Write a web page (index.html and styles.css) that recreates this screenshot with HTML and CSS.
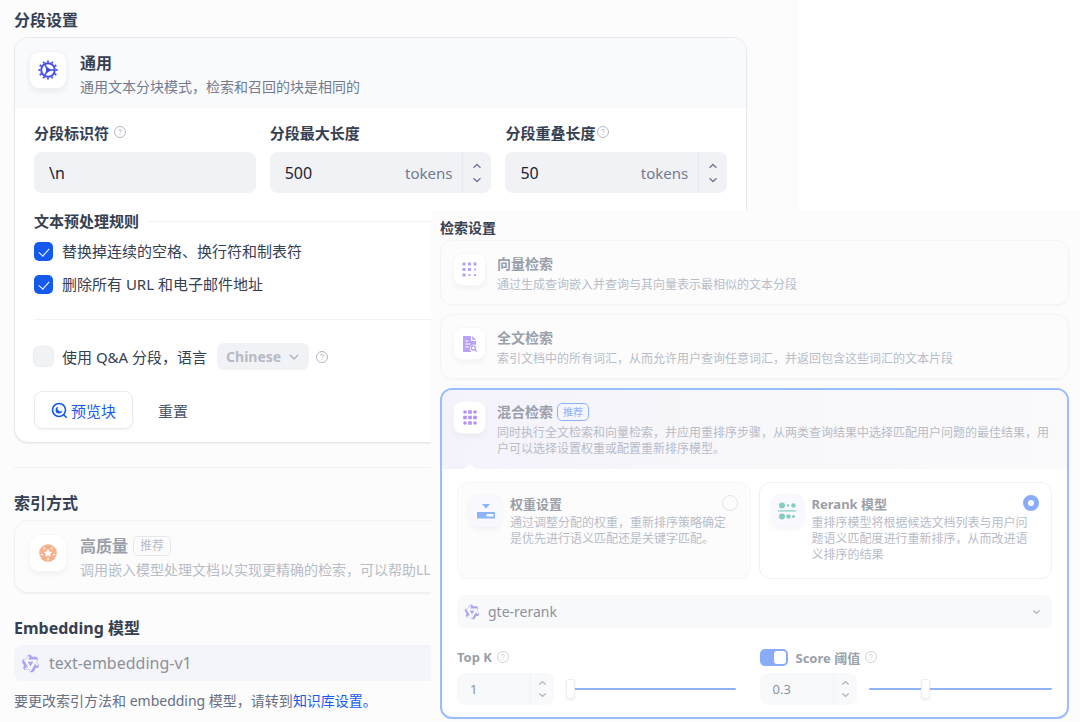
FILE: index.html
```html
<!DOCTYPE html>
<html lang="zh-CN">
<head>
    <meta charset="UTF-8">
    <meta name="viewport" content="width=device-width, initial-scale=1.0">
    <title>分段设置</title>
    <link rel="stylesheet" href="styles.css">
</head>
<body>
    <!-- shared icons -->
    <svg class="sprite" aria-hidden="true">
        <symbol id="help" viewBox="0 0 14 14">
            <circle cx="7" cy="7" r="5.5" fill="none" stroke="currentColor"/>
            <path d="M5.6 5.7a1.4 1.4 0 1 1 2 1.3q-.6.3-.6.9M7 9.1v1" fill="none" stroke="currentColor"/>
        </symbol>
        <symbol id="up" viewBox="0 0 10 6">
            <path d="M1.5 4.7 5 1.5l3.500 3.200" fill="none" stroke="currentColor" stroke-width="1.400"/>
        </symbol>
        <symbol id="down" viewBox="0 0 10 6">
            <path d="M1.5 1.300 5 4.500l3.500-3.200" fill="none" stroke="currentColor" stroke-width="1.400"/>
        </symbol>
        <symbol id="model" viewBox="0 0 24 24">
            <path fill="currentColor" fill-rule="evenodd" d="M12.604 1.34c.393.69.784 1.382 1.174 2.075a.18.18 0 00.157.091h5.552c.174 0 .322.11.446.327l1.454 2.57c.19.337.24.478.024.837-.26.43-.513.864-.76 1.3l-.367.658c-.106.196-.223.28-.04.512l2.652 4.637c.172.301.111.494-.043.77-.437.785-.882 1.564-1.335 2.34-.159.272-.352.375-.68.37-.777-.016-1.552-.01-2.327.016a.099.099 0 00-.081.05 575.097 575.097 0 01-2.705 4.74c-.169.293-.38.363-.725.364-.997.003-2.002.004-3.017.002a.537.537 0 01-.465-.271l-1.335-2.323a.09.09 0 00-.083-.049H4.982c-.285.03-.553-.001-.805-.092l-1.603-2.77a.543.543 0 01-.002-.54l1.207-2.12a.198.198 0 000-.197 550.951 550.951 0 01-1.875-3.272l-.79-1.395c-.16-.31-.173-.496.095-.965.465-.813.927-1.625 1.387-2.436.132-.234.304-.334.584-.335a338.3 338.3 0 012.589-.001.124.124 0 00.107-.063l2.806-4.895a.488.488 0 01.422-.246c.524-.001 1.053 0 1.583-.006L11.704 1c.341-.003.724.032.9.34zm-3.432.403a.06.06 0 00-.052.03L6.254 6.788a.157.157 0 01-.135.078H3.253c-.056 0-.07.025-.041.074l5.81 10.156c.025.042.013.062-.034.063l-2.795.015a.218.218 0 00-.2.116l-1.32 2.31c-.044.078-.021.118.068.118l5.716.008c.046 0 .08.02.104.061l1.403 2.454c.046.081.092.082.139 0l5.006-8.76.783-1.382a.055.055 0 01.096 0l1.424 2.53a.122.122 0 00.107.062l2.763-.02a.04.04 0 00.035-.02.041.041 0 000-.04l-2.9-5.086a.108.108 0 010-.113l.293-.507 1.12-1.977c.024-.041.012-.062-.035-.062H9.2c-.059 0-.073-.026-.043-.077l1.434-2.505a.107.107 0 000-.114L9.225 1.774a.06.06 0 00-.053-.031zm6.29 8.02c.046 0 .058.02.034.06l-.832 1.465-2.613 4.585a.056.056 0 01-.05.029.058.058 0 01-.05-.029L8.498 9.841c-.02-.034-.01-.052.028-.054l.216-.012 6.722-.012z"/>
        </symbol>
    </svg>

    <div class="page">
        <main class="settings">
            <h2 class="heading">分段设置</h2>
            <section class="card">
                <div class="card-head">
                    <span class="icon-box">
                        <svg class="icon-gear" width="20" height="20" viewBox="0 0 20 20">
                            <circle cx="10" cy="10" r="8.600" fill="none" stroke="currentColor" stroke-width="2" pathLength="36" stroke-dasharray="1.200 1.800" stroke-dashoffset=".6"/>
                            <circle cx="10" cy="10" r="6.800" fill="none" stroke="currentColor" stroke-width="1.900"/>
                            <path d="M8 6.600 13.500 10 8 13.400z" fill="currentColor"/>
                            <path d="M6.600 4.200 9 8.600M6.600 15.800 9 11.400M12 10h5" stroke="currentColor" stroke-width="1.500"/>
                        </svg>
                    </span>
                    <div class="card-text">
                        <h3>通用</h3>
                        <p>通用文本分块模式，检索和召回的块是相同的</p>
                    </div>
                </div>
                <div class="card-body">
                    <div class="fields">
                        <div class="field">
                            <div class="label-row">
                                <label for="separator">分段标识符</label>
                                <svg class="help" width="14" height="14"><use href="#help"/></svg>
                            </div>
                            <div class="input-box"><input id="separator" type="text" value="\n"></div>
                        </div>
                        <div class="field">
                            <div class="label-row"><label for="max-length">分段最大长度</label></div>
                            <div class="input-box">
                                <input id="max-length" type="number" value="500">
                                <span class="unit">tokens</span>
                                <span class="stepper">
                                    <button type="button" aria-label="增加"><svg width="10" height="6"><use href="#up"/></svg></button>
                                    <button type="button" aria-label="减少"><svg width="10" height="6"><use href="#down"/></svg></button>
                                </span>
                            </div>
                        </div>
                        <div class="field">
                            <div class="label-row tight">
                                <label for="overlap">分段重叠长度</label>
                                <svg class="help" width="14" height="14"><use href="#help"/></svg>
                            </div>
                            <div class="input-box">
                                <input id="overlap" type="number" value="50">
                                <span class="unit">tokens</span>
                                <span class="stepper">
                                    <button type="button" aria-label="增加"><svg width="10" height="6"><use href="#up"/></svg></button>
                                    <button type="button" aria-label="减少"><svg width="10" height="6"><use href="#down"/></svg></button>
                                </span>
                            </div>
                        </div>
                    </div>

                    <h4 class="rules-title">文本预处理规则</h4>
                    <div class="rules">
                        <label class="check"><input type="checkbox" checked>替换掉连续的空格、换行符和制表符</label>
                        <label class="check"><input type="checkbox" checked>删除所有 URL 和电子邮件地址</label>
                    </div>

                    <div class="qa">
                        <label class="check"><input type="checkbox" disabled>使用 Q&amp;A 分段，语言</label>
                        <span class="lang">
                            <select aria-label="语言" disabled><option>Chinese</option></select>
                            <svg width="12" height="8" viewBox="0 0 10 6"><use href="#down"/></svg>
                        </span>
                        <svg class="help" width="14" height="14"><use href="#help"/></svg>
                    </div>

                    <div class="actions">
                        <button type="button" class="btn preview">
                            <svg width="17" height="17" viewBox="0 0 17 17" fill="none" stroke="currentColor" stroke-width="1.600">
                                <circle cx="8" cy="8" r="6.500"/>
                                <path d="m12.700 12.700 3 3"/>
                                <path d="M7.500 4.600a3.500 3.500 0 1 0 4 4A2.600 2.600 0 0 1 7.500 4.600z" fill="currentColor" stroke="none"/>
                            </svg>
                            预览块
                        </button>
                        <button type="button" class="btn reset">重置</button>
                    </div>
                </div>
            </section>

            <hr class="divider">

            <h2 class="heading">索引方式</h2>
            <section class="card muted">
                <div class="card-head">
                    <span class="icon-box">
                        <svg width="18" height="18" viewBox="0 0 18 18">
                            <circle cx="9" cy="9" r="8.800" fill="#f7b08c"/>
                            <path d="m9 5 1.300 2.500 2.800.5-2 2 .4 2.800L9 11.600l-2.500 1.200.4-2.800-2-2 2.800-.5z" fill="#fff"/>
                            <g stroke="#fff" stroke-width="1.400" stroke-linecap="round">
                                <path d="m4.800 3.900.8 1M13.200 3.900l-.8 1M2.300 10.800l1.200-.4M15.700 10.800l-1.200-.4M9 15.700v-1.300"/>
                            </g>
                        </svg>
                    </span>
                    <div class="card-text">
                        <h3>高质量<span class="tag">推荐</span></h3>
                        <p>调用嵌入模型处理文档以实现更精确的检索，可以帮助LL</p>
                    </div>
                </div>
            </section>

            <h2 class="heading">Embedding 模型</h2>
            <div class="model-box">
                <svg class="model-icon" width="19" height="19"><use href="#model"/></svg>
                <select aria-label="Embedding 模型" disabled><option>text-embedding-v1</option></select>
            </div>
            <p class="note">要更改索引方法和 embedding 模型，请转到<a href="#">知识库设置。</a></p>
        </main>

        <aside class="retrieval">
            <h2>检索设置</h2>
            <section class="option">
                <div class="option-head">
                    <span class="icon-box">
                        <svg width="15" height="15" viewBox="0 0 15 15" fill="#b9a0f8">
                            <path d="M.5.5h3v3h-3zM6 .5h3v3H6zM11.500.5h3v3h-3zM.5 6h3v3h-3zM6 6h3v3H6zM.5 11.500h3v3h-3zM12 6.500h2v2h-2zM6.500 12h2v2h-2zM12 12h2v2h-2z"/>
                        </svg>
                    </span>
                    <div class="option-text">
                        <h3>向量检索</h3>
                        <p>通过生成查询嵌入并查询与其向量表示最相似的文本分段</p>
                    </div>
                </div>
            </section>
            <section class="option">
                <div class="option-head">
                    <span class="icon-box">
                        <svg width="16" height="16" viewBox="0 0 16 16">
                            <path d="M2 0h7v5h5v4.200A4 4 0 0 0 8.700 15l.8 1H2a1 1 0 0 1-1-1V1a1 1 0 0 1 1-1zM10.200 0 14 3.800h-3.800z" fill="#b9a0f8"/>
                            <path d="M3.300 5h3M3.300 8h5M3.300 11h3.500" stroke="#fff" stroke-width="1.200"/>
                            <circle cx="11.300" cy="12" r="2" fill="none" stroke="#b9a0f8" stroke-width="1.300"/>
                            <path d="m12.800 13.500 2 2" stroke="#b9a0f8" stroke-width="1.400"/>
                        </svg>
                    </span>
                    <div class="option-text">
                        <h3>全文检索</h3>
                        <p>索引文档中的所有词汇，从而允许用户查询任意词汇，并返回包含这些词汇的文本片段</p>
                    </div>
                </div>
            </section>
            <section class="option active">
                <div class="option-head">
                    <span class="icon-box">
                        <svg width="14" height="15" viewBox="0 0 14 15" fill="#b78ff5">
                            <circle cx="2" cy="2" r="1.800"/><path d="M5.200.2h3.600v3.600H5.200z"/><circle cx="12" cy="2" r="1.800"/>
                            <path d="M.2 5.700h3.600v3.600H.2zM5.200 5.700h3.600v3.600H5.200zM10.200 5.700h3.600v3.600h-3.600z"/>
                            <circle cx="2" cy="13" r="1.800"/><path d="M5.200 11.200h3.600v3.600H5.200z"/><circle cx="12" cy="13" r="1.800"/>
                        </svg>
                    </span>
                    <div class="option-text">
                        <h3>混合检索<span class="tag">推荐</span></h3>
                        <p>同时执行全文检索和向量检索，并应用重排序步骤，从两类查询结果中选择匹配用户问题的最佳结果，用户可以选择设置权重或配置重新排序模型。</p>
                    </div>
                </div>
                <div class="option-body">
                    <div class="modes">
                        <label class="mode">
                            <span class="icon-box">
                                <svg width="20" height="16" viewBox="0 0 20 16" fill="#8cb5f9">
                                    <path d="M6 1h8l-4 4.500z"/>
                                    <path fill-rule="evenodd" d="M1 9h18v6.500H1zM10.500 11v2.500h7V11z"/>
                                </svg>
                            </span>
                            <span class="mode-text">
                                <span class="mode-title">权重设置<input type="radio" name="mode"></span>
                                <span class="mode-desc">通过调整分配的权重，重新排序策略确定是优先进行语义匹配还是关键字匹配。</span>
                            </span>
                        </label>
                        <label class="mode selected">
                            <span class="icon-box">
                                <svg width="18" height="18" viewBox="0 0 18 18" fill="#84cdbf">
                                    <circle cx="4" cy="3.500" r="3"/><circle cx="10" cy="3.500" r="1.200"/><circle cx="15.500" cy="3.500" r="2.200"/>
                                    <path d="M0 8.300h18v1.200H0z"/>
                                    <circle cx="4" cy="14.500" r="3"/><circle cx="10.500" cy="14.500" r="2.200"/><circle cx="15.500" cy="14.500" r="1.500"/>
                                </svg>
                            </span>
                            <span class="mode-text">
                                <span class="mode-title">Rerank 模型<input type="radio" name="mode" checked></span>
                                <span class="mode-desc">重排序模型将根据候选文档列表与用户问题语义匹配度进行重新排序，从而改进语义排序的结果</span>
                            </span>
                        </label>
                    </div>

                    <div class="model-box small">
                        <svg class="model-icon" width="16" height="16"><use href="#model"/></svg>
                        <select aria-label="Rerank 模型"><option>gte-rerank</option></select>
                        <svg class="arrow" width="9" height="6"><use href="#down"/></svg>
                    </div>

                    <div class="params">
                        <div class="param">
                            <div class="label-row">
                                <label for="top-k">Top K</label>
                                <svg class="help" width="14" height="14"><use href="#help"/></svg>
                            </div>
                            <div class="param-row">
                                <div class="input-box small">
                                    <input id="top-k" type="number" value="1">
                                    <span class="stepper">
                                        <button type="button" aria-label="增加"><svg width="9" height="6"><use href="#up"/></svg></button>
                                        <button type="button" aria-label="减少"><svg width="9" height="6"><use href="#down"/></svg></button>
                                    </span>
                                </div>
                                <input class="slider" type="range" aria-label="Top K" min="1" max="10" value="1">
                            </div>
                        </div>
                        <div class="param">
                            <div class="label-row">
                                <input id="use-score" class="switch" type="checkbox" role="switch" aria-label="Score 阈值" checked>
                                <label for="score">Score 阈值</label>
                                <svg class="help" width="14" height="14"><use href="#help"/></svg>
                            </div>
                            <div class="param-row">
                                <div class="input-box small">
                                    <input id="score" type="number" step="0.1" value="0.3">
                                    <span class="stepper">
                                        <button type="button" aria-label="增加"><svg width="9" height="6"><use href="#up"/></svg></button>
                                        <button type="button" aria-label="减少"><svg width="9" height="6"><use href="#down"/></svg></button>
                                    </span>
                                </div>
                                <input class="slider" type="range" aria-label="Score 阈值" min="0" max="1" step="0.1" value="0.3">
                            </div>
                        </div>
                    </div>
                </div>
            </section>
        </aside>
    </div>
</body>
</html>
```
FILE: styles.css
```css
* {
    box-sizing: border-box;
}

body {
    margin: 0;
    background: #fff;
    color: #354052;
    font-family: "Noto Sans", "Noto Sans CJK SC", sans-serif;
    font-size: 15px;
}

h2, h3, h4, p {
    margin: 0;
}

input, select, button {
    font: inherit;
    color: inherit;
    margin: 0;
    padding: 0;
    border: none;
    background: none;
}

svg {
    flex: none;
}

.sprite {
    display: none;
}

.page {
    position: relative;
    min-height: 100vh;
}

/* left side */
.settings {
    width: 74%;
    min-height: 100vh;
    padding: 8px 52px 0 14px;
    background: #fcfcfd;
}

.heading {
    font-size: 16px;
    line-height: 24px;
    margin-bottom: 5px;
}

.card {
    border: 1px solid #e6e8f0;
    border-radius: 14px;
    background: #fff;
    box-shadow: 0 1px 2px rgba(16, 24, 40, 0.06);
    overflow: hidden;
}

.card-head {
    display: flex;
    gap: 14px;
    padding: 13px 15px 9px;
    background: #f9fafc;
}

.icon-box {
    flex: none;
    display: flex;
    align-items: center;
    justify-content: center;
    width: 36px;
    height: 36px;
    margin-top: 1px;
    border-radius: 9px;
    background: #fff;
    box-shadow: 0 0 0 1px #f0f1f5, 0 3px 6px rgba(16, 24, 40, 0.08);
}

.icon-gear {
    color: #444ce7;
}

.card-text h3 {
    display: flex;
    align-items: center;
    gap: 5px;
    font-size: 16px;
    line-height: 24px;
}

.card-text p {
    font-size: 14px;
    line-height: 24px;
    color: #717a90;
    white-space: nowrap;
}

.tag {
    padding: 0 6px;
    border: 1px solid #e6e7eb;
    border-radius: 5px;
    font-size: 12px;
    line-height: 18px;
    font-weight: 400;
}

.card-body {
    padding: 14px 19px 13px;
}

.fields {
    display: grid;
    grid-template-columns: repeat(3, 1fr);
    gap: 14px;
}

.label-row {
    display: flex;
    align-items: center;
    gap: 4px;
    height: 20px;
    margin-bottom: 10px;
    font-weight: 700;
}

.label-row.tight {
    gap: 1px;
}

.help {
    color: #b4b8c2;
}

.input-box {
    display: flex;
    align-items: center;
    height: 41px;
    padding-left: 15px;
    border-radius: 8px;
    background: #f1f2f6;
    font-size: 16px;
}

.input-box input {
    flex: 1;
    width: 0;
    min-width: 0;
    color: #1c2433;
    outline: none;
    appearance: textfield;
}

.input-box input::-webkit-inner-spin-button {
    display: none;
}

.unit {
    padding-right: 10px;
    font-size: 15px;
    color: #717a90;
}

.stepper {
    display: flex;
    flex-direction: column;
    align-self: stretch;
    justify-content: center;
    gap: 2px;
    width: 29px;
    border-left: 1px solid #e7e9ef;
    color: #717a90;
}

.stepper button {
    display: flex;
    align-items: center;
    justify-content: center;
    height: 12px;
}

.rules-title {
    display: flex;
    align-items: center;
    gap: 9px;
    margin-top: 18px;
    font-size: 15px;
    line-height: 20px;
}

.rules-title::after {
    content: "";
    flex: 1;
    height: 1px;
    background: #f2f3f6;
}

.rules {
    display: flex;
    flex-direction: column;
    gap: 13px;
    padding: 10px 0 25px;
    border-bottom: 1px solid #f2f3f6;
}

.check {
    display: flex;
    align-items: center;
    gap: 9px;
    line-height: 20px;
}

.check input {
    appearance: none;
    display: flex;
    justify-content: center;
    width: 19px;
    height: 19px;
    border-radius: 5px;
    background: #f1f2f6;
    box-shadow: 0 0 1px 1px #eaecf0;
}

.check input:checked {
    background: #155aef;
    box-shadow: none;
}

.check input:checked::before {
    content: "";
    width: 5px;
    height: 9px;
    margin-top: 4px;
    border: solid #fff;
    border-width: 0 1px 1px 0;
    transform: rotate(42deg);
}

.qa {
    display: flex;
    align-items: center;
    gap: 6px;
    margin-top: 23px;
}

.qa .check {
    margin-right: 4px;
}

.lang {
    display: flex;
    align-items: center;
    gap: 6px;
    height: 27px;
    padding: 0 9px;
    border-radius: 7px;
    background: #f1f2f6;
    color: #b6bac4;
    font-weight: 700;
    font-size: 14px;
}

.lang select,
.model-box select {
    appearance: none;
    opacity: 1;
}

.actions {
    display: flex;
    gap: 9px;
    margin-top: 21px;
}

.btn {
    display: flex;
    align-items: center;
    gap: 3px;
    height: 38px;
    padding: 0 16px;
    border-radius: 8px;
}

.preview {
    border: 1px solid #e9ebf0;
    color: #155aef;
    box-shadow: 0 1px 2px rgba(16, 24, 40, 0.06);
}

.reset {
    color: #4b566a;
}

.divider {
    height: 1px;
    margin: 24px 0 23px;
    border: none;
    background: #f0f1f4;
}

.card.muted {
    margin-bottom: 23px;
    border-color: #f1f2f5;
    background: #fcfcfd;
}

.muted .card-head {
    padding-bottom: 10px;
    background: none;
}

.muted .icon-box {
    box-shadow: 0 0 0 1px #f7f7fa, 0 3px 6px rgba(16, 24, 40, 0.05);
}

.muted h3 {
    color: #9a9fa9;
}

.muted p,
.muted .tag {
    color: #b8bcc7;
}

.model-box {
    display: flex;
    align-items: center;
    gap: 9px;
    height: 36px;
    padding: 0 7px;
    border-radius: 8px;
    background: #f4f5fa;
    font-size: 16px;
    color: #8e9198;
}

.model-box select {
    flex: 1;
}

.model-icon {
    color: #aba6f3;
}

.note {
    margin-top: 10px;
    font-size: 14px;
    line-height: 20px;
    color: #676f83;
}

.note a {
    color: #155aef;
    text-decoration: none;
}

/* retrieval panel lies over the lower right of the page */
.retrieval {
    position: absolute;
    top: 210px;
    right: 0;
    bottom: 0;
    left: 431px;
    padding: 8px 11px 0 9px;
    background: #fcfcfd;
}

.retrieval h2 {
    font-size: 14px;
    line-height: 20px;
    margin-bottom: 2px;
}

.option {
    margin-bottom: 9px;
    border: 1px solid #f3f4f6;
    border-radius: 12px;
    box-shadow: 0 1px 2px rgba(16, 24, 40, 0.03);
    overflow: hidden;
}

.option-head {
    display: flex;
    gap: 12px;
    padding: 12px 16px 11px 13px;
}

.retrieval .icon-box {
    width: 31px;
    height: 31px;
    border-radius: 8px;
    box-shadow: 0 0 0 1px #f7f7fa, 0 3px 6px rgba(16, 24, 40, 0.05);
}

.option-text h3 {
    display: flex;
    align-items: center;
    gap: 4px;
    margin-bottom: 3px;
    font-size: 14px;
    line-height: 21px;
    color: #9a9fa9;
}

.option-text p {
    font-size: 12px;
    line-height: 16px;
    color: #b8bcc7;
}

.option-text .tag {
    padding: 0 5px;
    border-color: #8fb3fb;
    color: #8fb3fb;
    font-size: 10px;
    line-height: 16px;
}

.option.active {
    margin-bottom: 0;
    border: 2px solid #9bbcfd;
    background: #fff;
}

.active .option-head {
    position: relative;
    padding: 11px 16px 12px 12px;
    background: linear-gradient(90deg, #f4f2fb, #f8f8fb 50%, #fafafc);
}

/* notch pointing up from the body */
.active .option-head::after {
    content: "";
    position: absolute;
    left: 22px;
    bottom: 0;
    border: solid transparent;
    border-width: 0 6px 5px;
    border-bottom-color: #fff;
}

.option-body {
    padding: 13px 15px 12px;
}

.modes {
    display: grid;
    grid-template-columns: 1fr 1fr;
    gap: 8px;
}

.mode {
    display: flex;
    gap: 9px;
    min-height: 97px;
    padding: 10px 12px;
    border: 1px solid #f5f6f8;
    border-radius: 11px;
    background: #fcfcfd;
}

.mode.selected {
    border-color: #f0f1f4;
    background: #fff;
}

.mode .icon-box {
    margin-top: 2px;
    background: #f9f8fe;
}

.mode-text {
    flex: 1;
}

.mode-title {
    display: flex;
    align-items: center;
    justify-content: space-between;
    height: 20px;
    margin-bottom: 2px;
    font-size: 13px;
    font-weight: 700;
    color: #9a9fa9;
}

.mode-title input {
    appearance: none;
    width: 16px;
    height: 16px;
    border: 1px solid #e2e4e9;
    border-radius: 50%;
}

.mode-title input:checked {
    border: 5px solid #8aabf7;
}

.mode-desc {
    display: block;
    padding-right: 8px;
    font-size: 12px;
    line-height: 16px;
    color: #b8bcc7;
}

.model-box.small {
    height: 33px;
    margin: 16px 0 18px;
    padding-right: 11px;
    gap: 8px;
    background: #f8f9fb;
    font-size: 14px;
}

.arrow {
    color: #aeb3bf;
}

.params {
    display: grid;
    grid-template-columns: 1fr 1fr;
    gap: 10px;
}

.param:first-child {
    padding-right: 14px;
}

.param .label-row {
    height: 22px;
    margin-bottom: 5px;
    font-size: 13px;
    color: #9a9fa9;
}

.param .help {
    color: #cfd2d9;
}

.param-row {
    display: flex;
    align-items: center;
    gap: 12px;
}

.input-box.small {
    flex: none;
    width: 97px;
    height: 32px;
    padding-left: 13px;
    background: #f8f9fb;
    font-size: 13px;
}

.input-box.small input {
    color: #8e9198;
}

.small .stepper {
    width: 24px;
    gap: 0;
    border-color: #f2f3f6;
    color: #aeb3bf;
}

.slider {
    flex: 1;
    min-width: 0;
    height: 22px;
    appearance: none;
}

.slider::-webkit-slider-runnable-track {
    height: 2px;
    border-radius: 1px;
    background: #8fb3fb;
}

.slider::-webkit-slider-thumb {
    appearance: none;
    width: 9px;
    height: 20px;
    margin-top: -9px;
    border: 1px solid #eceef2;
    border-radius: 3px;
    background: #fff;
    box-shadow: 0 1px 2px rgba(16, 24, 40, 0.08);
}

.switch {
    appearance: none;
    display: flex;
    justify-content: flex-end;
    width: 28px;
    height: 17px;
    margin-right: 4px;
    padding: 2px;
    border-radius: 5px;
    background: #8aabf7;
}

.switch::before {
    content: "";
    width: 12px;
    background: #fff;
    border-radius: 3px;
}
```
